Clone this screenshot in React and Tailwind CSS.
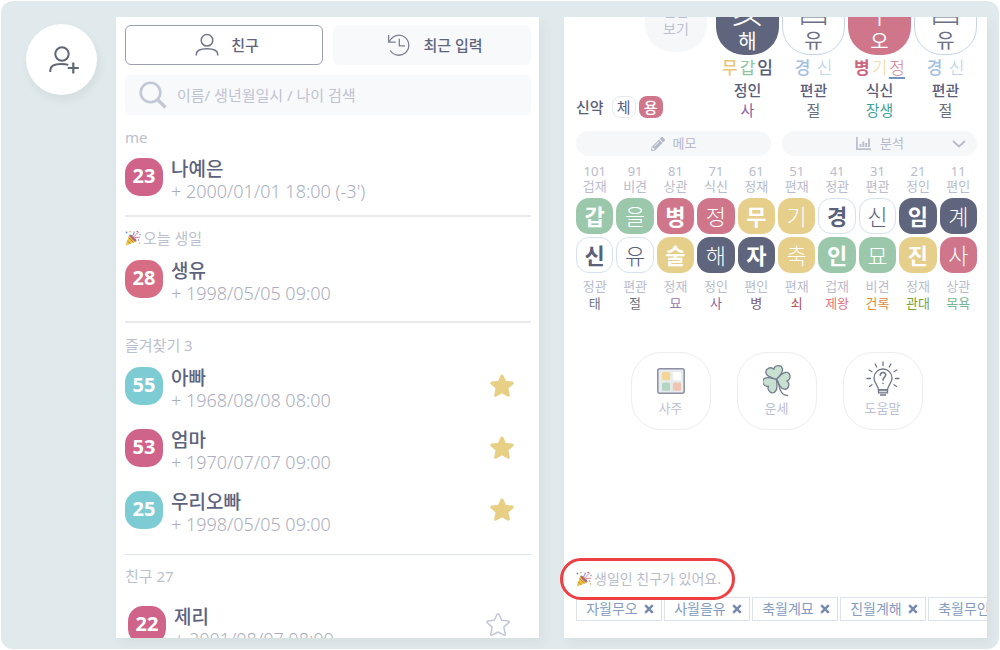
import React, { useState } from "react";
import { FaPencilAlt } from "react-icons/fa";

const sections = [
  {
    title: "me",
    className: "pt-3 pb-[13px]",
    listClass: "mt-[11px]",
    people: [
      { age: 23, name: "나예은", date: "2000/01/01 18:00 (-3')", color: "bg-[#d0638a]" },
    ],
  },
  {
    title: "오늘 생일",
    party: true,
    className: "border-t-2 border-[#e9eaf0] pt-[11px] pb-[17px]",
    listClass: "mt-3",
    people: [
      { age: 28, name: "생유", date: "1998/05/05 09:00", color: "bg-[#d66d85]" },
    ],
  },
  {
    title: "즐겨찾기 3",
    className: "border-t-2 border-[#e9eaf0] pt-3 pb-[19px]",
    listClass: "mt-3",
    people: [
      { age: 55, name: "아빠", date: "1968/08/08 08:00", color: "bg-[#7dccd4]", star: "full" },
      { age: 53, name: "엄마", date: "1970/07/07 09:00", color: "bg-[#d0638a]", star: "full" },
      { age: 25, name: "우리오빠", date: "1998/05/05 09:00", color: "bg-[#7dccd4]", star: "full" },
    ],
  },
  {
    title: "친구 27",
    className: "border-t border-[#dfe6ea] pt-[11px]",
    listClass: "mt-5 pl-[3px]",
    people: [
      { age: 22, name: "제리", date: "2001/08/07 08:00", color: "bg-[#d0638a]", star: "empty" },
    ],
  },
];

const tile = {
  green: "bg-[#9bc8ab] text-white",
  pink: "bg-[#cf768b] text-white",
  yellow: "bg-[#e6ce8b] text-white",
  navy: "bg-[#5f657c] text-white",
  white: "bg-white text-[#5a607a] border border-[#d5e0f0]",
};

const pillars = [
  {
    hanja: "亥", sound: "해", card: "bg-[#5f657c] text-white",
    stems: [
      ["무", "text-[#e8c877] font-medium"],
      ["갑", "text-[#8cc6a1]"],
      ["임", "text-[#565b75] font-medium"],
    ],
    star: "정인", stage: "사", stageColor: "text-[#8a5fa3]",
  },
  {
    hanja: "酉", sound: "유", card: "bg-white text-[#6a6f86] border border-[#c3d5ea]",
    stems: [["경", "text-[#a3bfe2] font-medium"], [" 신", "text-[#b4cdea] font-light"]],
    star: "편관", stage: "절", stageColor: "text-[#6a6f7d]",
  },
  {
    hanja: "午", sound: "오", card: "bg-[#cf768b] text-white",
    stems: [
      ["병", "text-[#cf6481] font-bold"],
      ["기", "text-[#ecd69b] font-light"],
      ["정", "text-[#d98296] font-light border-b-2 border-[#6d95bd]"],
    ],
    star: "식신", stage: "장생", stageColor: "text-[#3fa39b]",
  },
  {
    hanja: "酉", sound: "유", card: "bg-white text-[#6a6f86] border border-[#c3d5ea]",
    stems: [["경", "text-[#a3bfe2] font-medium"], [" 신", "text-[#b4cdea] font-light"]],
    star: "편관", stage: "절", stageColor: "text-[#6a6f7d]",
  },
];

// [age, upper star, stem, stem tile, branch, branch tile, lower star, stage, stage color]
const decades = [
  [101, "겁재", "갑", "green", "신", "white", "정관", "태", "text-[#6b7488]"],
  [91, "비견", "을", "green", "유", "white", "편관", "절", "text-[#6a6f7d]"],
  [81, "상관", "병", "pink", "술", "yellow", "정재", "묘", "text-[#9a7aae]"],
  [71, "식신", "정", "pink", "해", "navy", "정인", "사", "text-[#8a5fa3]"],
  [61, "정재", "무", "yellow", "자", "navy", "편인", "병", "text-[#7d5a76]"],
  [51, "편재", "기", "yellow", "축", "yellow", "편재", "쇠", "text-[#a84f58]"],
  [41, "정관", "경", "white", "인", "green", "겁재", "제왕", "text-[#e27480]"],
  [31, "편관", "신", "white", "묘", "green", "비견", "건록", "text-[#d98d3f]"],
  [21, "정인", "임", "navy", "진", "yellow", "정재", "관대", "text-[#7a9f35]"],
  [11, "편인", "계", "navy", "사", "pink", "상관", "목욕", "text-[#78b596]"],
];

const boldLetters = ["갑", "병", "무", "경", "임", "술", "자", "인", "진"];

const chips = ["자월무오", "사월을유", "축월계묘", "진월계해", "축월무인"];

const UserIcon = () => (
  <svg width="24" height="24" viewBox="0 0 24 24" fill="none" stroke="#6f7689" strokeWidth="1.5">
    <circle cx="12" cy="7.3" r="5.8" />
    <path d="M1.3 22.5v-1.2c0-3.4 3.4-5.6 10.7-5.6s10.7 2.2 10.7 5.6v1.2" />
  </svg>
);

const AddUserIcon = () => (
  <svg width="32" height="30" viewBox="0 0 32 30" fill="none" stroke="#5f6774" strokeWidth="2">
    <circle cx="14" cy="9" r="6.7" />
    <path d="M2.3 27v-1.8c0-4 4-6.2 11-6.2 3 0 5.2.3 7 .9" />
    <path d="M25.3 17.5v11M19.8 23h11" strokeWidth="2.2" />
  </svg>
);

const HistoryIcon = () => (
  <svg width="24" height="24" viewBox="0 0 24 24" fill="none" stroke="#7a8091" strokeWidth="1.3">
    <path d="M3.3 17.5A10 10 0 1 0 3.600 6.5L2 9" />
    <path d="M1.6 2v7.2h7.2" />
    <path d="M12.3 5.8v7H18" />
  </svg>
);

const SearchIcon = () => (
  <svg width="28" height="28" viewBox="0 0 28 28" fill="none" stroke="#c3c8d6">
    <circle cx="11.5" cy="11.5" r="9.8" strokeWidth="2.6" />
    <path d="M18.5 18.5l8 8" strokeWidth="3.4" />
  </svg>
);

const PartyIcon = () => (
  <svg className="shrink-0" width="16" height="16" viewBox="0 0 16 16" fill="none">
    <path d="M4.5 4.5L.8 14.6c-.2.5.3.9.8.7l9.800-4z" fill="#edc23f" />
    <path d="M3.6 7.5l4.9 4.8M2.3 10.8l3 3" stroke="#b07a4a" strokeWidth=".9" />
    <ellipse cx="8" cy="8" rx="1.3" ry="4.7" transform="rotate(-45 8 8)" fill="#a8697c" />
    <path d="M7.5 6.500c.2-2 2-2.300 1.700-5" stroke="#8f98e0" strokeWidth="1.1" />
    <path d="M9.5 8.500c1.200-2 3.200-.5 5.500-1.500" stroke="#e88d97" strokeWidth="1.2" />
    <path d="M9 6.500c2-1 2.500-3.500 5-4.500" stroke="#ec9fb5" strokeWidth="1.1" />
    <circle cx="1.5" cy="2.5" r=".9" fill="#5f8fe0" />
    <circle cx="5" cy="1.7" r=".8" fill="#e8a33d" />
    <circle cx="12.2" cy="1.5" r=".8" fill="#df5b70" />
    <circle cx="15" cy="4.5" r=".8" fill="#6b9be6" />
    <circle cx="13.5" cy="10" r=".8" fill="#7b86d8" />
    <circle cx="14.5" cy="13" r=".7" fill="#e8a33d" />
  </svg>
);

const StarIcon = ({ full }) => (
  <svg
    width="26"
    height="26"
    viewBox="0 0 26 26"
    strokeLinejoin="round"
    fill={full ? "#e7cf86" : "none"}
    stroke={full ? "#e7cf86" : "#c3c6da"}
    strokeWidth={full ? 3 : 1.5}
  >
    {full ? (
      <path d="M13 3l2.900 6.300 7.300.8-5.400 4.800 1.600 7.300L13 18.700l-6.400 3.500 1.600-7.300-5.400-4.800 7.300-.8z" />
    ) : (
      <path d="M13 2q.9 0 1.300 1l2.400 5.300 6.600.7q1.600.4.500 1.600l-5 4.500 1.500 7q.1 1.600-1.300 1.100L13 20l-6 3.200q-1.400.5-1.300-1.100l1.500-7-5-4.500q-1.100-1.200.5-1.600l6.600-.7L11.700 3q.4-1 1.300-1z" />
    )}
  </svg>
);

const ChartIcon = () => (
  <svg width="16" height="14" viewBox="0 0 16 14" fill="#bcc1d2">
    <path d="M0 0h1.800v11.200H15V13H0z" />
    <path d="M3.500 7h2v3h-2zM6.300 4.500h2V10h-2zM9.100 6h2v4h-2zM12 1.500h2V10h-2z" />
  </svg>
);

const ChevronIcon = () => (
  <svg width="14" height="8" viewBox="0 0 14 8" fill="none" stroke="#b4bacb" strokeWidth="1.7">
    <path d="M1 1l6 5.500L13 1" />
  </svg>
);

const CloseIcon = () => (
  <svg width="10" height="10" viewBox="0 0 10 10" stroke="#7589ad" strokeWidth="2.4">
    <path d="M1.200 1.200l7.600 7.600M8.800 1.200L1.200 8.800" />
  </svg>
);

const SajuIcon = () => (
  <svg width="28" height="26" viewBox="0 0 28 26">
    <rect x=".8" y=".8" width="26.4" height="24.4" rx="2" fill="#e8ebed" stroke="#8b8fa3" strokeWidth="1.5" />
    <rect x="5" y="4" width="8.2" height="8.2" rx="1.5" fill="#f3d596" />
    <rect x="15.8" y="4" width="8.2" height="8.2" rx="1.5" fill="#fff" />
    <rect x="5" y="14.5" width="8.2" height="8.2" rx="1.5" fill="#b5d6c2" />
    <rect x="15.8" y="14.5" width="8.2" height="8.2" rx="1.5" fill="#efc4b2" />
  </svg>
);

const leaf = "M0 0C-3-2.500-8.500-4.500-8.500-9c0-4.500 6.500-5.500 8.500-1.500 2-4 8.500-3 8.500 1.500C8.500-4.500 3-2.500 0 0z";

const CloverIcon = () => (
  <svg width="28" height="32" viewBox="0 0 28 32" stroke="#757c8f" strokeWidth="1.3" strokeLinecap="round" strokeLinejoin="round">
    <g fill="#c8e0d0" transform="translate(13.5 14.5)">
      <path d={leaf} transform="rotate(-15)" />
      <path d={leaf} transform="rotate(98)" />
      <path d={leaf} transform="rotate(-130)" />
    </g>
    <path d="M13.5 14.500c3 3 2 7 4 11 1.500 3.500 4 5 7 5" fill="none" />
  </svg>
);

const BulbIcon = () => (
  <svg width="34" height="36" viewBox="0 0 34 36" fill="none" stroke="#6f7689" strokeWidth="1.3" strokeLinecap="round">
    <path d="M12.5 29c0-4.500-4.500-6.500-4.500-12a9 9 0 0 1 18 0c0 5.500-4.500 7.500-4.500 12z" />
    <path d="M12.5 29h9v2.800h-9zM14.500 34h5" fill="#d9e0e2" />
    <path d="M14.300 14.300c0-3.800 5.500-3.600 5.400-.2-.1 2.200-2.700 2.300-2.700 5M17 22.200v.3" strokeWidth="1.6" />
    <path d="M17 1v3.500M9.200 3l1.500 3M24.800 3l-1.500 3M3.200 9l2.800 1.700M30.800 9L28 10.700M1 17.500h3.500M33 17.500h-3.500M3.500 25.500L6 23.800M30.500 25.500L28 23.800" />
  </svg>
);

const Person = ({ person }) => (
  <li className="flex h-11 items-start">
    <span
      className={`flex h-[38px] w-[38px] shrink-0 items-center justify-center rounded-[15px] pb-0.5 text-xl font-bold text-white ${person.color}`}
    >
      {person.age}
    </span>
    <div className="ml-2 flex-1 whitespace-nowrap">
      <p className="text-[19px] leading-[22px] font-medium text-[#5d637d]">{person.name}</p>
      <p className="text-lg leading-[22px] font-light text-[#abaec0]">+ {person.date}</p>
    </div>
    {person.star && (
      <button
        aria-label="즐겨찾기"
        className={person.star === "full" ? "mt-1.5 mr-4" : "mt-1.5 mr-5"}
      >
        <StarIcon full={person.star === "full"} />
      </button>
    )}
  </li>
);

const FriendsPanel = () => {
  const [keyword, setKeyword] = useState("");

  return (
    <section className="min-w-0 overflow-hidden bg-white pt-2 pr-2 pl-[9px] shadow-[4px_6px_10px_rgba(60,90,90,0.06)]">
      <div className="grid grid-cols-2 gap-[10px] text-[15px] font-medium text-[#5f657d]">
        <button className="flex h-10 items-center justify-center gap-3 rounded-md border border-[#9a9eae] pl-1.5">
          <UserIcon />
          친구
        </button>
        <button className="flex h-10 items-center justify-center gap-3 rounded-md bg-[#f8f9fb] pl-1.5">
          <HistoryIcon />
          최근 입력
        </button>
      </div>

      <label className="mt-[10px] flex h-10 items-center gap-[10px] rounded-md bg-[#f8f9fb] pl-3.5">
        <SearchIcon />
        <input
          type="text"
          aria-label="검색"
          value={keyword}
          onChange={(e) => setKeyword(e.target.value)}
          placeholder="이름/ 생년월일시 / 나이 검색"
          className="min-w-0 flex-1 text-[15px] text-[#5f657d] outline-none placeholder:text-[#bfc2d1]"
        />
      </label>

      {sections.map((section) => (
        <div key={section.title} className={section.className}>
          <h2 className="flex items-center gap-0.5 text-[15px] leading-5 text-[#bcbfce]">
            {section.party && <PartyIcon />}
            {section.title}
          </h2>
          <ul className={`flex flex-col gap-[18px] ${section.listClass}`}>
            {section.people.map((person) => (
              <Person key={person.name} person={person} />
            ))}
          </ul>
        </div>
      ))}
    </section>
  );
};

const ChartPanel = () => (
  <div className="relative min-w-0">
    <section className="flex h-full flex-col overflow-hidden bg-white pr-[10px] pl-3 text-[#5a607a] shadow-[4px_6px_10px_rgba(60,90,90,0.06)]">
      {/* pillars, scrolled partly out of view */}
      <div className="flex gap-[9px]">
        <div className="flex flex-1 flex-col items-end">
          <div className="flex h-[35px] items-end">
            <button className="flex h-[76px] w-[62px] flex-col justify-end rounded-b-[28px] bg-[#f6f7f9] pb-3.5 text-center text-sm leading-[18px] text-[#bcc1d0]">
              <span>신살</span>
              <span>보기</span>
            </button>
          </div>
          <div className="mt-auto mb-0.5 flex w-full items-center text-[15px]">
            <span className="mr-2 font-medium">신약</span>
            <span className="flex h-[22px] w-6 items-center justify-center rounded-lg border border-[#e3eaf2]">체</span>
            <span className="ml-[3px] flex h-[22px] w-6 items-center justify-center rounded-lg bg-[#cf768b] font-medium text-white">용</span>
          </div>
        </div>
        <div className="flex gap-[3px]">
          {pillars.map((p, i) => (
            <div key={i} className="flex w-[63px] flex-col items-center">
              <div className="flex h-[38px] items-end">
                <div className={`flex h-[90px] w-[63px] flex-col items-center justify-end rounded-b-[28px] ${p.card}`}>
                  <span className="text-[32px] leading-9 font-light">{p.hanja}</span>
                  <span className="text-xl leading-[26px]">{p.sound}</span>
                </div>
              </div>
              <p className="mt-1 flex h-5 items-start gap-0.5 text-[17px] leading-[18px] whitespace-pre">
                {p.stems.map(([letter, style]) => (
                  <span key={letter} className={style}>{letter}</span>
                ))}
              </p>
              <p className="mt-px text-[15px] leading-5 font-medium">{p.star}</p>
              <p className={`text-[15px] leading-5 ${p.stageColor}`}>{p.stage}</p>
            </div>
          ))}
        </div>
      </div>

      <div className="mt-[11px] grid grid-cols-2 gap-[11px] text-[13px] text-[#b4b9cb]">
        <button className="flex h-[25px] items-center justify-center gap-2 rounded-full bg-[#f6f7f9]">
          <FaPencilAlt size={14} />
          메모
        </button>
        <button className="flex h-[25px] items-center rounded-full bg-[#f6f7f9] pr-[11px] pl-[74px]">
          <ChartIcon />
          <span className="ml-2">분석</span>
          <span className="ml-auto">
            <ChevronIcon />
          </span>
        </button>
      </div>

      <div className="mt-2 grid grid-cols-10 gap-[3px] text-center text-[13px] whitespace-nowrap text-[#b8bccc]">
        {decades.map(([age, top, stem, stemTile, branch, branchTile, bottom, stage, stageColor]) => (
          <div key={age}>
            <p className="leading-[15px]">{age}</p>
            <p className="leading-[15px]">{top}</p>
            {[[stem, stemTile], [branch, branchTile]].map(([letter, color], i) => (
              <div
                key={i}
                className={`flex h-9 items-center justify-center rounded-[13px] text-[22px] ${
                  i === 0 ? "mt-1" : "mt-[3px]"
                } ${
                  boldLetters.includes(letter) || (i === 1 && letter === "신") ? "font-bold" : "font-light"
                } ${tile[color]}`}
              >
                {letter}
              </div>
            ))}
            <p className="mt-[5px] leading-[17px]">{bottom}</p>
            <p className={`leading-[17px] ${stageColor}`}>{stage}</p>
          </div>
        ))}
      </div>

      <div className="mt-10 flex justify-center gap-[26px] text-[13px] leading-4 text-[#bcc0d3]">
        <button className="flex h-[78px] w-20 flex-col items-center justify-end rounded-[30px] border border-[#ededed] pb-[13px]">
          <SajuIcon />
          <span className="mt-1.5">사주</span>
        </button>
        <button className="flex h-[78px] w-20 flex-col items-center justify-end rounded-[30px] border border-[#ededed] pb-[13px]">
          <CloverIcon />
          <span className="mt-[3px]">운세</span>
        </button>
        <button className="flex h-[78px] w-20 flex-col items-center justify-end rounded-[30px] border border-[#ededed] pb-[13px]">
          <BulbIcon />
          <span className="mt-[3px]">도움말</span>
        </button>
      </div>

      <footer className="mt-auto -mr-[10px] overflow-hidden pb-[17px]">
        <p className="flex items-center gap-0.5 text-sm leading-5 text-[#b9bdc9]">
          <PartyIcon />
          생일인 친구가 있어요.
        </p>
        <div className="mt-2 flex gap-0.5">
          {chips.map((chip) => (
            <button
              key={chip}
              className="flex h-6 w-[86px] shrink-0 items-center justify-center gap-1.5 border border-[#dde3ea] pl-0.5 text-sm whitespace-nowrap text-[#869bbf]"
            >
              {chip}
              <CloseIcon />
            </button>
          ))}
        </div>
      </footer>
    </section>
    <div className="pointer-events-none absolute bottom-[38px] -left-1 h-[42px] w-[175px] rounded-full border-3 border-[#ee4042]" />
  </div>
);

const App = () => {
  return (
    <main className="h-screen bg-white p-px font-['Noto_Sans','Noto_Sans_CJK_KR',sans-serif]">
      <div className="flex h-full rounded-xl bg-[#e0e9eb] pt-4 pr-3 pb-[11px] pl-[25px]">
        <button
          aria-label="친구 추가"
          className="mt-[7px] mr-[19px] flex h-[71px] w-[71px] shrink-0 items-center justify-center rounded-full bg-white pl-1 shadow-[2px_5px_8px_rgba(60,90,90,0.08)]"
        >
          <AddUserIcon />
        </button>
        <div className="grid min-w-0 flex-1 grid-cols-2 gap-[25px]">
          <FriendsPanel />
          <ChartPanel />
        </div>
      </div>
    </main>
  );
};

export default App;
